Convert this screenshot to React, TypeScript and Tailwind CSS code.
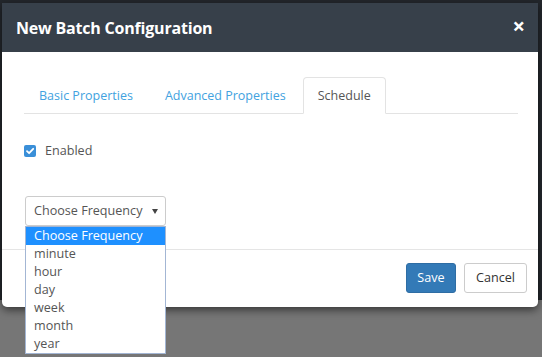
import React from "react";

const font = { fontFamily: '"Open Sans", "Liberation Sans", sans-serif' };

export default function App() {
  const options = ["Choose Frequency", "minute", "hour", "day", "week", "month", "year"];
  return (
    <div
      className="w-[542px] h-[357px] overflow-hidden pt-[3px] pl-[2px] bg-[linear-gradient(to_bottom,#23272c_0px,#23272c_300px,#767676_300px,#767676_100%)]"
      style={font}
    >
      <div className="w-[536px] h-[304px] bg-white rounded-b-[5px] shadow-[0_3px_9px_rgba(0,0,0,0.55)] flex flex-col">
        <div className="h-[49px] bg-[#37404a] flex items-center justify-between pl-[14px] pr-[13px] shrink-0">
          <span className="text-[16px] font-bold text-white leading-none tracking-[-0.2px]">New Batch Configuration</span>
          <span className="text-[22px] font-bold text-white leading-none -mt-[6px]">×</span>
        </div>
        <div className="h-[197px] pt-[25px] pl-[22px] pr-[20px] shrink-0">
          <div className="flex border-b border-[#e3e3e3] h-[37px] text-[12.5px]">
            <div className="px-[15px] mr-[2px] flex items-center h-[36px] text-[#42a2e0] pt-[2px]">Basic Properties</div>
            <div className="px-[15px] mr-[2px] flex items-center h-[36px] text-[#42a2e0] pt-[2px]">Advanced Properties</div>
            <div className="px-[14px] flex items-center h-[37px] text-[#555] bg-white border border-[#e3e3e3] border-b-white rounded-t-[4px] pt-[1px]">Schedule</div>
          </div>
          <div className="mt-[27px] flex items-center h-[20px] gap-[9px]">
            <span className="w-[12px] h-[12px] rounded-[2px] bg-[#3a8fd8] flex items-center justify-center">
              <svg width="10" height="10" viewBox="0 0 10 10">
                <path d="M2 5.2 L4.1 7.2 L8.2 2.8" stroke="white" strokeWidth="1.8" fill="none" strokeLinecap="round" strokeLinejoin="round" />
              </svg>
            </span>
            <span className="text-[12.6px] text-[#555]">Enabled</span>
          </div>
          <div className="mt-[35px] relative w-[141px] ml-[1px]">
            <div className="h-[30px] border border-[#ccc] rounded-[3px] flex items-center justify-between pl-[8px] pr-[7px] text-[12.6px] text-[#555]">
              <span>Choose Frequency</span>
              <svg width="6" height="5" viewBox="0 0 6 5">
                <path d="M0 0 L6 0 L3 5 Z" fill="#444" />
              </svg>
            </div>
            <div className="absolute left-0 top-[30px] w-[141px] bg-white border border-[#a3b6d4] z-10">
              {options.map((o, i) => (
                <div
                  key={o}
                  className={
                    i === 0
                      ? "h-[18px] leading-[18px] pl-[8px] text-[12.6px] bg-[#1e90ff] text-white"
                      : "h-[18px] leading-[18px] pl-[8px] text-[12.6px] text-[#555]"
                  }
                >
                  {o}
                </div>
              ))}
            </div>
          </div>
        </div>
        <div className="border-t border-[#e5e5e5] flex justify-end gap-[8px] pt-[13px] pr-[11px]">
          <button className="w-[50px] h-[30px] rounded-[3px] bg-[#337ab7] border border-[#2e6da4] text-white text-[12.6px]">Save</button>
          <button className="w-[63px] h-[30px] rounded-[3px] bg-white border border-[#ccc] text-[#333] text-[12.6px]">Cancel</button>
        </div>
      </div>
    </div>
  );
}
